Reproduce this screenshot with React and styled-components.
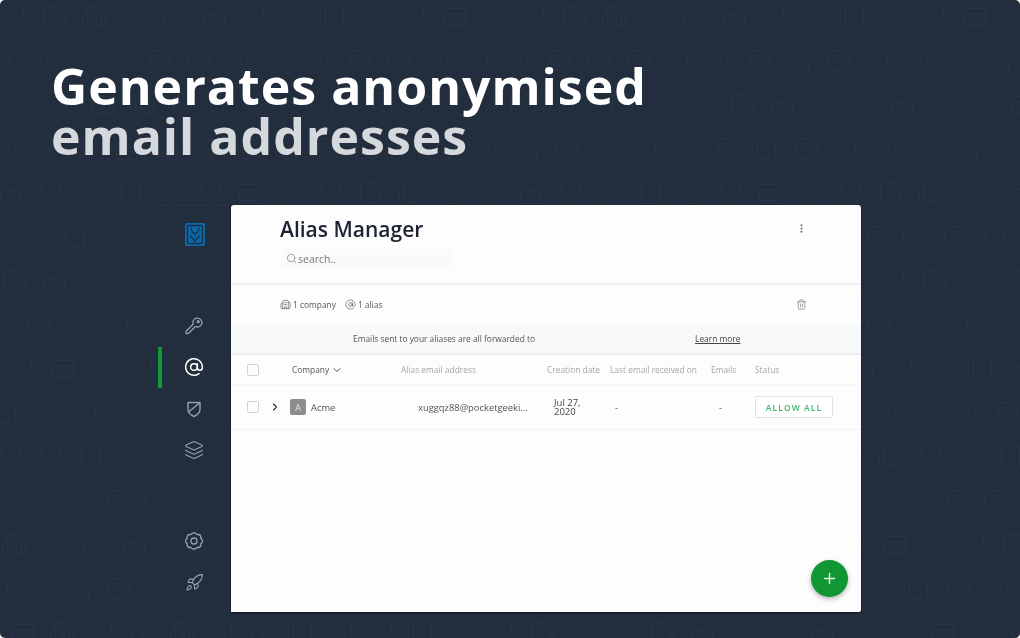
import React from "react";
import styled, { createGlobalStyle } from "styled-components";
import {
  AtSign,
  Building,
  Building2,
  ChevronDown,
  ChevronRight,
  CreditCard,
  Key,
  Layers,
  Lock,
  MapPin,
  MoreVertical,
  Plus,
  Rocket,
  Search,
  Shield,
  ShieldCheck,
  ShieldX,
  Trash2,
  User,
  Wallet,
} from "lucide-react";

const GlobalStyle = createGlobalStyle`
  html, body {
    margin: 0;
    padding: 0;
    height: 100%;
    overflow: hidden;
    background: #fff;
    font-family: "Open Sans", "Liberation Sans", sans-serif;
  }
`;

const patternIcons = [ShieldCheck, Building, Layers, CreditCard, ShieldX, Wallet, Layers, Key, User, MapPin, Building2, Shield, Lock];

function KeyIcon() {
  return (
    <svg width="20" height="20" viewBox="0 0 20 20" fill="none" stroke="currentColor" strokeWidth="1.3" strokeLinejoin="round">
      <path d="M12.8 2.2a4.6 4.6 0 0 1 4.9 6.1 4.6 4.6 0 0 1-6.3 2.2L4.6 17.3l-2.6.4.3-2.7 6.8-6.700a4.6 4.6 0 0 1 3.700-6.100z" />
      <circle cx="14.200" cy="5.700" r="1" />
    </svg>
  );
}

function SlashShield() {
  return (
    <svg width="20" height="20" viewBox="0 0 20 20" fill="none" stroke="currentColor" strokeWidth="1.4" strokeLinejoin="round">
      <path d="M4 3.500h12v7c0 3.200-2.600 5.300-6 7-3.400-1.700-6-3.800-6-7z" />
      <path d="M4.500 13 15.500 4" />
    </svg>
  );
}

function Logo() {
  return (
    <svg width="20" height="23" viewBox="0 0 20 23">
      <rect width="20" height="23" rx="1.500" fill="#0e68a8" />
      <g fill="none" stroke="#17324a" strokeWidth="1.300">
        <rect x="2.500" y="2.500" width="15" height="18" rx="1" />
        <path d="M6 4.500c.5 4 1.500 6 4 6s3.500-2 4-6" />
        <path d="M5 12.500 10 18l5-5.500M10 10.500v3" />
      </g>
    </svg>
  );
}

function Flower() {
  return (
    <svg width="20" height="20" viewBox="0 0 20 20" fill="none" stroke="currentColor" strokeWidth="1.300" strokeLinejoin="round">
      <path d="M7.700 2.800c1.200-1.200 3.400-1.200 4.600 0l.8.800 1.200-.1c1.700 0 2.500 1.200 2.500 2.700v1l.8.800c1.200 1.200 1.200 2.800 0 4l-.8.800v1c0 1.500-.8 2.700-2.500 2.700l-1.200-.1-.8.800c-1.200 1.200-3.400 1.200-4.600 0l-.8-.8-1.200.1c-1.700 0-2.500-1.200-2.500-2.700v-1l-.8-.8c-1.200-1.200-1.200-2.800 0-4l.8-.8v-1c0-1.500.8-2.700 2.500-2.700l1.200.1z" />
      <circle cx="10" cy="10" r="3" />
    </svg>
  );
}

const patternRows = Array.from({ length: 15 }, (_, r) => ({
  offset: [-6, -22, 2, -14, -10, -26][r % 6],
  icons: Array.from({ length: 27 }, (_, c) => patternIcons[(c * 5 + r * 3 + (c * r) % 4) % patternIcons.length]),
}));

export default function App() {
  return (
    <>
      <GlobalStyle />
      <Page>
        <Pattern>
          {patternRows.map((row, r) => (
            <PatternRow key={r} $offset={row.offset}>
              {row.icons.map((Icon, c) => (
                <PatternCell key={c}>
                  <Icon size={27} strokeWidth={0.8} />
                </PatternCell>
              ))}
            </PatternRow>
          ))}
        </Pattern>
        <Headline>
          Generates anonymised
          <Muted>email addresses</Muted>
        </Headline>
        <Shell>
          <Sidebar>
            <LogoSlot>
              <Logo />
            </LogoSlot>
            <NavGroup>
              <NavItem><KeyIcon /></NavItem>
              <NavItem $active><AtSign size={20} strokeWidth={1.8} /></NavItem>
              <NavItem><SlashShield /></NavItem>
              <NavItem><Layers size={20} strokeWidth={1.3} /></NavItem>
            </NavGroup>
            <BottomGroup>
              <NavItem><Flower /></NavItem>
              <NavItem><Rocket size={19} strokeWidth={1.4} /></NavItem>
            </BottomGroup>
          </Sidebar>
          <Card>
            <CardHead>
              <div>
                <Title>Alias Manager</Title>
                <SearchBox>
                  <Search size={11} strokeWidth={1.5} />
                  search..
                </SearchBox>
              </div>
              <MenuBtn><MoreVertical size={11} strokeWidth={2.2} /></MenuBtn>
            </CardHead>
            <Toolbar>
              <Stats>
                <Stat><Building2 size={11} strokeWidth={1.4} />1 company</Stat>
                <Stat><AtSign size={11} strokeWidth={1.4} />1 alias</Stat>
              </Stats>
              <TrashBtn><Trash2 size={11} strokeWidth={2} /></TrashBtn>
            </Toolbar>
            <Notice>
              <NoticeText>Emails sent to your aliases are all forwarded to</NoticeText>
              <LearnMore>Learn more</LearnMore>
            </Notice>
            <HeaderRow>
              <Check />
              <span />
              <HeadCell $dark>Company <ChevronDown size={12} strokeWidth={2} /></HeadCell>
              <HeadCell>Alias email address</HeadCell>
              <HeadCell>Creation date</HeadCell>
              <HeadCell>Last email received on</HeadCell>
              <HeadCell>Emails</HeadCell>
              <HeadCell>Status</HeadCell>
            </HeaderRow>
            <DataRow>
              <Check />
              <Expand><ChevronRight size={12} strokeWidth={2.2} /></Expand>
              <CompanyCell><Avatar>A</Avatar>Acme</CompanyCell>
              <AliasCell>xuggqz88@pocketgeeki...</AliasCell>
              <DateCell>Jul 27, 2020</DateCell>
              <DashCell $pad={5}>-</DashCell>
              <DashCell $pad={8}>-</DashCell>
              <AllowBtn>ALLOW ALL</AllowBtn>
            </DataRow>
            <Fab><Plus size={17} strokeWidth={2} /></Fab>
          </Card>
        </Shell>
      </Page>
    </>
  );
}

const Page = styled.div`
  position: relative;
  width: 1020px;
  height: 638px;
  overflow: hidden;
  background: #222d3d;
  border-radius: 5px;
  padding: 61px 0 0 51px;
  box-sizing: border-box;
`;

const Pattern = styled.div`
  position: absolute;
  inset: -6px 0 0 0;
  display: flex;
  flex-direction: column;
  color: #2a3545;
  filter: blur(0.5px);
`;

const PatternRow = styled.div`
  display: flex;
  height: 44px;
  flex: none;
  margin-left: ${(p) => p.$offset}px;
`;

const PatternCell = styled.div`
  width: 40px;
  flex: none;
  display: flex;
  align-items: center;
  justify-content: center;
`;

const Headline = styled.h1`
  position: relative;
  margin: 0;
  font-size: 50px;
  line-height: 50px;
  font-weight: 700;
  letter-spacing: 1px;
  color: #fff;
`;

const Muted = styled.div`
  color: #d5d8dd;
`;

const Shell = styled.div`
  position: relative;
  display: flex;
  margin: 44px 0 0 107px;
  height: 407px;
`;

const Sidebar = styled.nav`
  width: 73px;
  display: flex;
  flex-direction: column;
  background: #222d3d;
  border-top: 1px solid #2a3646;
  color: #98a1ad;
`;

const LogoSlot = styled.div`
  display: flex;
  justify-content: center;
  padding-top: 17px;
`;

const NavGroup = styled.div`
  display: flex;
  flex-direction: column;
  margin-top: 59px;
`;

const BottomGroup = styled(NavGroup)`
  margin-top: auto;
  margin-bottom: 9px;
`;

const NavItem = styled.div`
  height: 41.500px;
  display: flex;
  align-items: center;
  justify-content: center;
  color: ${(p) => (p.$active ? "#fff" : "inherit")};
  border-left: 4px solid ${(p) => (p.$active ? "#0f9a35" : "transparent")};
  margin-right: 5px;
`;

const Card = styled.main`
  position: relative;
  width: 630px;
  background: #fdfdfe;
  border-radius: 3px 3px 2px 0;
  color: #444;
  box-shadow: 0 1px 2px rgba(0, 0, 0, 0.6);
`;

const CardHead = styled.header`
  height: 80px;
  box-sizing: border-box;
  padding: 10px 54px 0 49px;
  display: flex;
  justify-content: space-between;
  border-bottom: 2px solid #eff1f3;
`;

const Title = styled.div`
  font-size: 21px;
  line-height: 28px;
  font-weight: 600;
  color: #1c2431;
`;

const SearchBox = styled.div`
  width: 170px;
  height: 19px;
  margin: 6px 0 0 2px;
  padding-left: 4px;
  box-sizing: border-box;
  display: flex;
  align-items: center;
  gap: 1px;
  background: #f9fafb;
  font-size: 10.500px;
  color: #777;
`;

const MenuBtn = styled.div`
  display: flex;
  margin-top: 8px;
  height: 11px;
  color: #666;
`;

const Toolbar = styled.div`
  height: 39px;
  box-sizing: border-box;
  padding: 0 54px 0 49px;
  display: flex;
  align-items: center;
  justify-content: space-between;
`;

const Stats = styled.div`
  display: flex;
  gap: 9px;
`;

const Stat = styled.div`
  display: flex;
  align-items: center;
  gap: 2px;
  font-size: 8.400px;
  color: #555;
`;

const TrashBtn = styled.div`
  display: flex;
  height: 11px;
  color: #9a9a9a;
`;

const Notice = styled.div`
  height: 31px;
  box-sizing: border-box;
  display: flex;
  align-items: center;
  background: #f8f9fb;
  border-bottom: 2px solid #eceef0;
  font-size: 8.400px;
`;

const NoticeText = styled.span`
  margin-left: 122px;
  color: #555;
`;

const LearnMore = styled.span`
  margin-left: 160px;
  color: #444;
  text-decoration: underline;
`;

const rowGrid = `
  display: grid;
  grid-template-columns: 25px 18px 111px 146px 63px 101px 44px 1fr;
  align-items: center;
  padding-left: 16px;
`;

const HeaderRow = styled.div`
  ${rowGrid}
  height: 30px;
  box-sizing: border-box;
  border-bottom: 1px solid #f6f6f7;
`;

const HeadCell = styled.div`
  display: flex;
  align-items: center;
  gap: 2px;
  font-size: 8.400px;
  white-space: nowrap;
  color: ${(p) => (p.$dark ? "#555" : "#a3a7ab")};
  padding-left: ${(p) => (p.$dark ? "2px" : "0")};
`;

const DataRow = styled.div`
  ${rowGrid}
  height: 45px;
  box-sizing: border-box;
  border-bottom: 1px solid #f3f3f4;
`;

const Check = styled.div`
  width: 12px;
  height: 12px;
  box-sizing: border-box;
  border: 1px solid #cfd1d4;
  border-radius: 1.500px;
`;

const Expand = styled.div`
  display: flex;
  margin-left: -3px;
  color: #333;
`;

const CompanyCell = styled.div`
  display: flex;
  align-items: center;
  gap: 5px;
  font-size: 9.400px;
  color: #555;
`;

const Avatar = styled.div`
  width: 16px;
  height: 16px;
  border-radius: 2px;
  background: #8c8c8c;
  color: #e8e8e8;
  font-size: 9px;
  display: flex;
  align-items: center;
  justify-content: center;
`;

const AliasCell = styled.div`
  padding-left: 17px;
  font-size: 9.400px;
  white-space: nowrap;
  color: #555;
`;

const DateCell = styled.div`
  width: 40px;
  padding-left: 7px;
  font-size: 9.500px;
  line-height: 9px;
  color: #444;
`;

const DashCell = styled.div`
  padding-left: ${(p) => p.$pad}px;
  font-size: 9px;
  color: #555;
`;

const AllowBtn = styled.button`
  width: 78px;
  height: 22px;
  padding: 0;
  background: #fff;
  border: 1px solid #dfe1e3;
  border-radius: 2px;
  font: 600 8.500px "Open Sans", sans-serif;
  letter-spacing: 1.100px;
  color: #3fb56b;
`;

const Fab = styled.div`
  position: absolute;
  right: 13px;
  bottom: 15px;
  width: 37px;
  height: 37px;
  border-radius: 50%;
  background: #109632;
  color: #e6f4e9;
  display: flex;
  align-items: center;
  justify-content: center;
  box-shadow: 0 2px 5px rgba(0, 0, 0, 0.3);
`;
